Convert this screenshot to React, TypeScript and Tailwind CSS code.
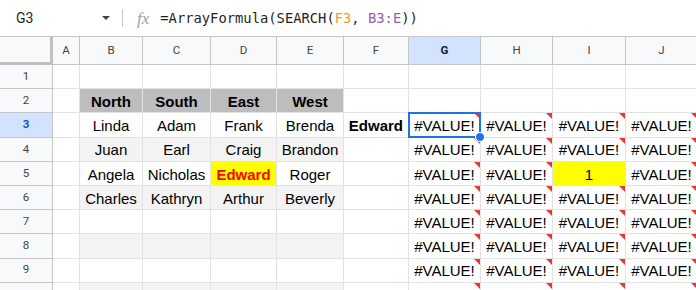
import React from "react";

const COLS = ["A", "B", "C", "D", "E", "F", "G", "H", "I", "J"];

type Cell = {
  text?: string;
  bold?: boolean;
  align?: "left" | "center" | "right";
  bg?: string;
  color?: string;
  error?: boolean;
  selected?: boolean;
};

const names = [
  ["North", "South", "East", "West"],
  ["Linda", "Adam", "Frank", "Brenda"],
  ["Juan", "Earl", "Craig", "Brandon"],
  ["Angela", "Nicholas", "Edward", "Roger"],
  ["Charles", "Kathryn", "Arthur", "Beverly"],
];

function buildRow(r: number): Cell[] {
  const row: Cell[] = COLS.map(() => ({}));
  // table B2:E10 with banding
  if (r >= 2) {
    for (let c = 1; c <= 4; c++) {
      if (r === 2) {
        row[c] = { text: names[0][c - 1], bold: true, align: "center", bg: "bg-[#bdbdbd]" };
      } else {
        row[c] = {
          text: names[r - 2]?.[c - 1],
          align: "center",
          bg: r % 2 === 0 ? "bg-[#f3f3f3]" : "",
        };
      }
    }
  }
  if (r === 5) row[3] = { text: "Edward", bold: true, align: "center", bg: "bg-[#ffff00]", color: "text-[#ff0000]" };
  if (r === 3) row[5] = { text: "Edward", bold: true, align: "right" };
  if (r >= 3) {
    for (let c = 6; c <= 9; c++) {
      row[c] = { text: "#VALUE!", align: "center", error: true, selected: r === 3 && c === 6 };
    }
  }
  if (r === 5) row[8] = { text: "1", align: "center", bg: "bg-[#ffff00]" };
  return row;
}

function GridCell({ cell }: { cell: Cell }) {
  const align =
    cell.align === "right" ? "justify-end pr-[5px]" : cell.align === "left" ? "justify-start pl-[4px]" : "justify-center";
  return (
    <div
      className={`relative flex items-center ${align} border-r border-b border-[#e2e2e2] ${cell.bg ?? ""} ${
        cell.color ?? "text-black"
      } ${cell.bold ? "font-bold" : ""} ${cell.selected ? "z-10" : ""} whitespace-nowrap pt-[3px]`}
    >
      {cell.text}
      {cell.error && (
        <span className="absolute top-0 right-0 w-0 h-0 border-t-[6px] border-l-[6px] border-t-[#e53935] border-l-transparent" />
      )}
      {cell.selected && (
        <>
          <span className="absolute -top-px -left-px -right-px -bottom-px border-2 border-[#1a73e8]" />
          <span className="absolute -bottom-[5px] -right-[5px] w-[10px] h-[10px] rounded-full bg-[#1a73e8] border border-white" />
        </>
      )}
    </div>
  );
}

export default function App() {
  const rows = [1, 2, 3, 4, 5, 6, 7, 8, 9, 10];
  return (
    <div className="w-[696px] h-[290px] overflow-hidden bg-white">
      {/* formula bar */}
      <div className="h-[37px] flex items-center border-b border-[#c4c7c5] bg-white">
        <div className="w-[122px] flex items-center pl-[16px] pr-[12px]">
          <span className="text-[14px] text-[#1f1f1f] font-['Roboto',sans-serif]">G3</span>
          <span className="ml-auto w-0 h-0 border-t-[4px] border-x-[4px] border-t-[#444] border-x-transparent" />
        </div>
        <div className="w-px h-[18px] bg-[#c4c7c5]" />
        <span className="ml-[14px] text-[17px] italic text-[#a0a0a0] font-['Liberation_Serif',serif] leading-none">fx</span>
        <span className="ml-[11px] text-[13.8px] text-[#1f1f1f] font-['DejaVu_Sans_Mono',monospace] whitespace-nowrap">
          =ArrayFormula(SEARCH(<span className="text-[#f09a32]">F3</span>, <span className="text-[#9c5bb5]">B3:E</span>))
        </span>
      </div>

      <div className="grid grid-cols-[53px_27px_63px_68px_66px_67px_65px_72px_72px_73px_72px] grid-rows-[28px_repeat(10,24.2px)] font-['Liberation_Sans',Arial,sans-serif] text-[15px]">
        {/* column header row */}
        <div className="bg-[#f8f9fa] border-r-[3px] border-b-[3px] border-[#c0c0c0]" />
        {COLS.map((c) => (
          <div
            key={c}
            className={`flex items-center justify-center border-r border-b border-[#c4c7c5] text-[11.5px] font-['Roboto',sans-serif] ${
              c === "G" ? "bg-[#d3e3fd] text-[#041e49] font-bold" : "bg-[#f8f9fa] text-[#444]"
            }`}
          >
            {c}
          </div>
        ))}

        {rows.map((r) => (
          <React.Fragment key={r}>
            <div
              className={`flex items-center justify-center border-r border-b border-[#c4c7c5] text-[11.5px] font-['Roboto',sans-serif] ${
                r === 3 ? "bg-[#d3e3fd] text-[#0b57d0] font-bold" : "bg-[#f8f9fa] text-[#444]"
              }`}
            >
              {r}
            </div>
            {buildRow(r).map((cell, i) => (
              <GridCell key={i} cell={cell} />
            ))}
          </React.Fragment>
        ))}
      </div>
    </div>
  );
}
